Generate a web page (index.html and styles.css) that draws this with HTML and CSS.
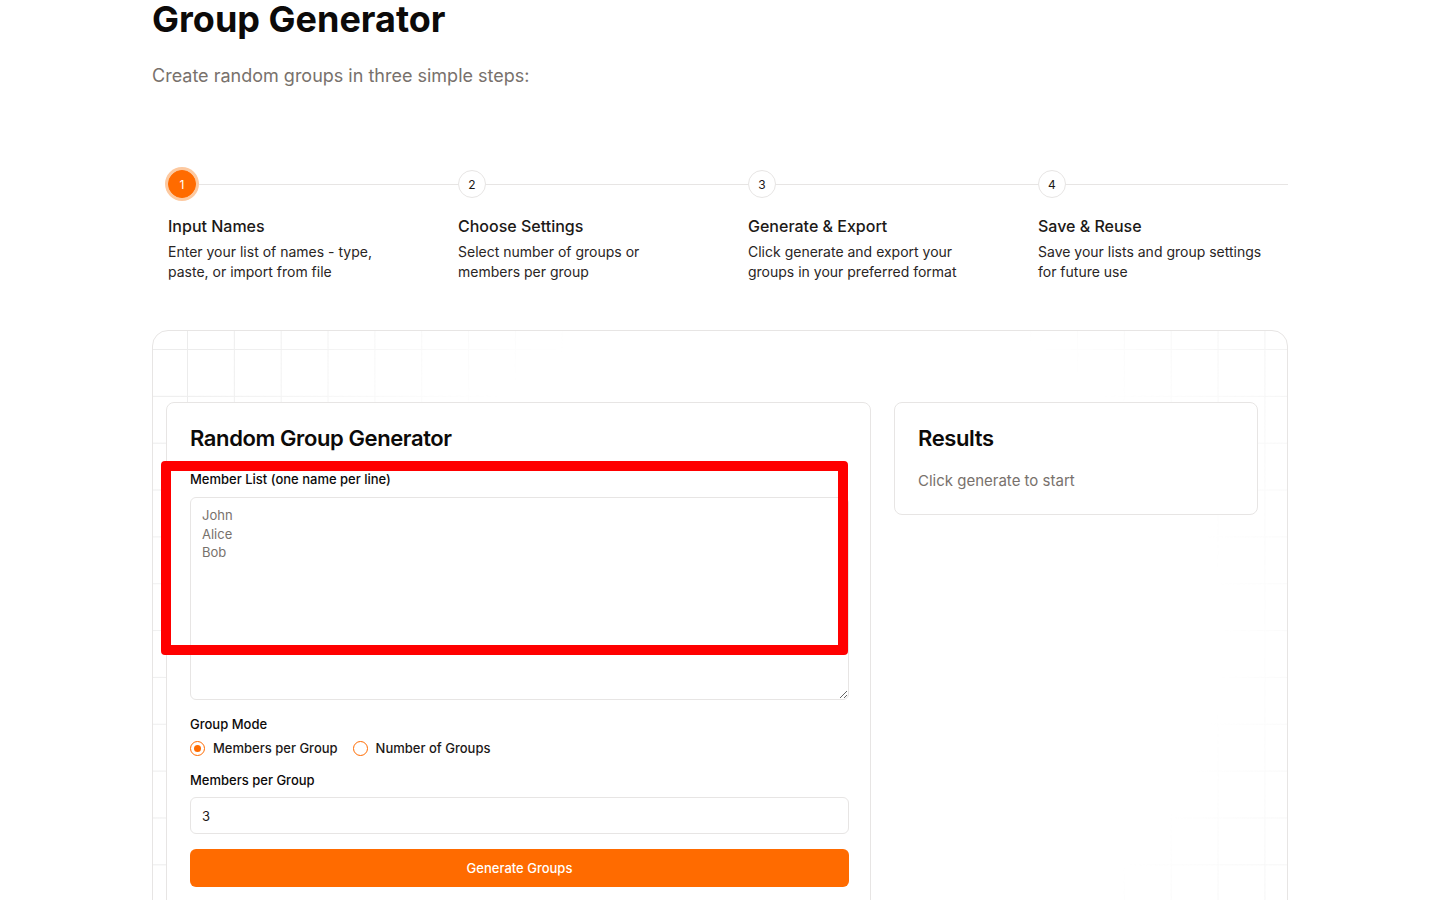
FILE: index.html
```html
<!DOCTYPE html>
<html lang="en">
<head>
<meta charset="utf-8">
<title>Group Generator</title>
<link rel="stylesheet" href="styles.css">
</head>
<body>
<div class="page">
  <h1 class="title">Group Generator</h1>
  <p class="subtitle">Create random groups in three simple steps:</p>

  <ol class="steps">
    <li class="step">
      <span class="step-num active">1</span>
      <h3 class="step-title">Input Names</h3>
      <p class="step-desc">Enter your list of names - type, paste, or import from file</p>
    </li>
    <li class="step">
      <span class="step-num">2</span>
      <h3 class="step-title">Choose Settings</h3>
      <p class="step-desc">Select number of groups or members per group</p>
    </li>
    <li class="step">
      <span class="step-num">3</span>
      <h3 class="step-title">Generate &amp; Export</h3>
      <p class="step-desc">Click generate and export your groups in your preferred format</p>
    </li>
    <li class="step">
      <span class="step-num">4</span>
      <h3 class="step-title">Save &amp; Reuse</h3>
      <p class="step-desc">Save your lists and group settings for future use</p>
    </li>
  </ol>

  <section class="tool">
    <div class="card form-card">
      <h2 class="card-title">Random Group Generator</h2>
      <label class="field-label" for="members">Member List (one name per line)</label>
      <textarea id="members" class="textarea" placeholder="John&#10;Alice&#10;Bob"></textarea>

      <div class="field-label mode-label">Group Mode</div>
      <div class="radios">
        <label class="radio"><span class="radio-dot checked"></span>Members per Group</label>
        <label class="radio"><span class="radio-dot"></span>Number of Groups</label>
      </div>

      <label class="field-label count-label" for="count">Members per Group</label>
      <input id="count" class="input" type="text" value="3">

      <button class="btn" type="button">Generate Groups</button>
    </div>

    <div class="card results-card">
      <h2 class="card-title">Results</h2>
      <p class="results-empty">Click generate to start</p>
    </div>
  </section>
</div>
<div class="highlight"></div>
</body>
</html>
```

FILE: styles.css
```css
* { box-sizing: border-box; }

html, body { margin: 0; padding: 0; }

body {
  position: relative;
  background: #ffffff;
  font-family: Inter, "Noto Sans", "Liberation Sans", sans-serif;
  color: #1c1917;
  height: 900px;
  overflow: hidden;
}

.page {
  width: 1136px;
  margin: 0 auto;
}

.title {
  margin: -1px 0 0;
  font-size: 36px;
  line-height: 40px;
  font-weight: 700;
  color: #0c0a09;
}

.subtitle {
  margin: 23px 0 0;
  font-size: 18px;
  line-height: 28px;
  color: #78716c;
}

/* Steps */
.steps {
  position: relative;
  list-style: none;
  margin: 80px 0 0;
  padding: 0 0 0 16px;
  display: grid;
  grid-template-columns: repeat(4, 250px);
  column-gap: 40px;
}

.steps::before {
  content: "";
  position: absolute;
  left: 16px;
  right: 0;
  top: 14px;
  height: 1px;
  background: #e7e5e4;
}

.step { position: relative; }

.step-num {
  position: relative;
  display: flex;
  align-items: center;
  justify-content: center;
  width: 28px;
  height: 28px;
  border-radius: 50%;
  border: 1px solid #e7e5e4;
  background: #ffffff;
  font-size: 12px;
  color: #1c1917;
}

.step-num.active {
  background: #ff6b00;
  border-color: #ff6b00;
  color: #ffffff;
  box-shadow: 0 0 0 3px #fdc9a0;
}

.step-title {
  margin: 16px 0 0;
  font-size: 16px;
  line-height: 24px;
  font-weight: 500;
  color: #1c1917;
}

.step-desc {
  margin: 4px 0 0;
  max-width: 232px;
  font-size: 14px;
  line-height: 20px;
  color: #292524;
}

/* Tool container */
.tool {
  position: relative;
  margin-top: 48px;
  border: 1px solid #e7e5e4;
  border-radius: 16px;
  padding: 71px 29px 40px 13px;
  display: grid;
  grid-template-columns: 705px 364px;
  column-gap: 23px;
  align-items: start;
  background: #ffffff;
  overflow: hidden;
}

.tool::before {
  content: "";
  position: absolute;
  inset: 0;
  background-image:
    linear-gradient(to right, #ececec 1px, transparent 1px),
    linear-gradient(to bottom, #ececec 1px, transparent 1px);
  background-size: 46.85px 46.85px;
  background-position: 34px 18px;
  -webkit-mask-image: radial-gradient(ellipse 600px 500px at 648px 310px, transparent 70%, #000 115%);
  mask-image: radial-gradient(ellipse 600px 500px at 648px 310px, transparent 70%, #000 115%);
  pointer-events: none;
}

.card {
  position: relative;
  background: #ffffff;
  border: 1px solid #e7e5e4;
  border-radius: 8px;
}

.form-card {
  padding: 23px 21px 24px 23px;
}

.results-card {
  padding: 23px 23px 21px 23px;
}

.card-title {
  margin: 0;
  font-size: 22px;
  line-height: 24px;
  font-weight: 600;
  letter-spacing: -0.4px;
  color: #0c0a09;
}

.field-label {
  display: block;
  margin-top: 19px;
  font-size: 13px;
  line-height: 20px;
  font-weight: 500;
  color: #0c0a09;
}

.textarea {
  display: block;
  width: 100%;
  height: 203px;
  margin-top: 8px;
  padding: 8px 11px;
  border: 1px solid #e7e5e4;
  border-radius: 6px;
  font-family: inherit;
  font-size: 13px;
  line-height: 18.5px;
  color: #1c1917;
  resize: vertical;
  background: #ffffff;
}

.textarea::placeholder { color: #78716c; }

.mode-label { margin-top: 14px; }

.radios {
  display: flex;
  gap: 15px;
  margin-top: 4px;
  height: 20px;
  align-items: center;
}

.radio {
  display: flex;
  align-items: center;
  gap: 8px;
  font-size: 13px;
  line-height: 20px;
  font-weight: 500;
  color: #1c1917;
}

.radio-dot {
  position: relative;
  width: 15px;
  height: 15px;
  border-radius: 50%;
  border: 1px solid #ff6b00;
  background: #ffffff;
}

.radio-dot.checked::after {
  content: "";
  position: absolute;
  inset: 3px;
  border-radius: 50%;
  background: #ff6b00;
}

.count-label { margin-top: 12px; }

.input {
  display: block;
  width: 100%;
  height: 37px;
  margin-top: 7px;
  padding: 0 11px;
  border: 1px solid #e7e5e4;
  border-radius: 6px;
  font-family: inherit;
  font-size: 13px;
  color: #1c1917;
  background: #ffffff;
}

.btn {
  display: block;
  width: 100%;
  height: 38px;
  margin-top: 15px;
  border: 0;
  border-radius: 6px;
  background: #ff6b00;
  color: #ffffff;
  font-family: inherit;
  font-size: 13px;
  font-weight: 500;
  cursor: pointer;
}

.results-empty {
  margin: 19px 0 0;
  font-size: 15px;
  line-height: 24px;
  color: #78716c;
}

/* Annotation overlay */
.highlight {
  position: absolute;
  left: 161px;
  top: 461px;
  width: 687px;
  height: 194px;
  border: 10px solid #ff0000;
  border-radius: 4px;
  pointer-events: none;
}
```
